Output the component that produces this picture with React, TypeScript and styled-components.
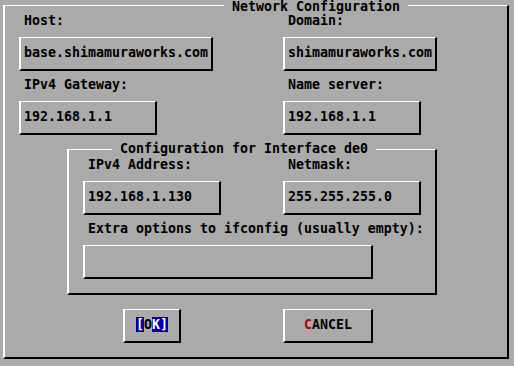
import React from "react";
import styled, { createGlobalStyle } from "styled-components";

const GlobalStyle = createGlobalStyle`
  html, body {
    margin: 0;
    padding: 0;
    background: #aaaaaa;
  }
  body {
    font-family: "DejaVu Sans Mono", "Liberation Mono", monospace;
    font-size: 13.29px;
    font-weight: bold;
    line-height: 16px;
    color: #000000;
  }
`;

const Screen = styled.div`
  width: 514px;
  height: 366px;
  box-sizing: border-box;
  padding: 5px 0 0 3px;
  background: #aaaaaa;
  overflow: hidden;
`;

// 3D frame: light edges top/left, dark edges bottom/right
const Frame = styled.div<{ $width: number }>`
  position: relative;
  box-sizing: border-box;
  width: ${(p) => p.$width}px;
  border-style: solid;
  border-width: 1px 2px 2px 2px;
  border-color: #ffffff #000000 #000000 #ffffff;
`;

const OuterFrame = styled(Frame)`
  padding: 7px 0 14px 0;
`;

const InnerFrame = styled(Frame)`
  margin: 14px 0 0 62px;
  padding: 7px 0 14px 14px;
`;

const FrameTitle = styled.div<{ $left: number; $top: number; $line: number }>`
  position: absolute;
  top: ${(p) => p.$top}px;
  left: ${(p) => p.$left}px;
  padding: 0 8px;
  line-height: ${(p) => p.$line}px;
  background: #aaaaaa;
  white-space: pre;
`;

const FieldGrid = styled.div<{ $col: number }>`
  display: grid;
  grid-template-columns: ${(p) => p.$col}px 1fr;
  row-gap: 6px;
`;

const TopGrid = styled(FieldGrid)`
  padding-left: 14px;
`;

const Field = styled.div<{ $span?: boolean }>`
  display: flex;
  flex-direction: column;
  gap: 8px;
  grid-column: ${(p) => (p.$span ? "1 / span 2" : "auto")};
`;

const Label = styled.div`
  height: 16px;
  padding-left: 5px;
  white-space: pre;
`;

const Box = styled.div<{ $width: number; $center?: boolean }>`
  box-sizing: border-box;
  width: ${(p) => p.$width}px;
  height: 34px;
  padding: 7px 0 8px ${(p) => (p.$center ? 0 : 3)}px;
  border-style: solid;
  border-width: 1px 2px 2px 2px;
  border-color: #ffffff #000000 #000000 #ffffff;
  text-align: ${(p) => (p.$center ? "center" : "left")};
  white-space: pre;
`;

const ButtonRow = styled.div`
  display: flex;
  gap: 102px;
  margin-top: 14px;
  padding-left: 118px;
`;

const Sel = styled.span<{ $on?: boolean }>`
  background: ${(p) => (p.$on ? "#0000aa" : "#aaaaaa")};
  color: ${(p) => (p.$on ? "#ffffff" : "#000000")};
`;

const Hot = styled.span`
  color: #aa0000;
`;

export default function App() {
  return (
    <Screen>
      <GlobalStyle />
      <OuterFrame $width={506}>
        <FrameTitle $left={219} $top={-6} $line={13}>
          Network Configuration
        </FrameTitle>
        <TopGrid $col={264}>
          <Field>
            <Label>Host:</Label>
            <Box $width={194}>base.shimamuraworks.com</Box>
          </Field>
          <Field>
            <Label>Domain:</Label>
            <Box $width={154}>shimamuraworks.com</Box>
          </Field>
          <Field>
            <Label>IPv4 Gateway:</Label>
            <Box $width={138}>192.168.1.1</Box>
          </Field>
          <Field>
            <Label>Name server:</Label>
            <Box $width={138}>192.168.1.1</Box>
          </Field>
        </TopGrid>

        <InnerFrame $width={370}>
          <FrameTitle $left={43} $top={-9} $line={16}>
            Configuration for Interface de0
          </FrameTitle>
          <FieldGrid $col={200}>
            <Field>
              <Label>IPv4 Address:</Label>
              <Box $width={138}>192.168.1.130</Box>
            </Field>
            <Field>
              <Label>Netmask:</Label>
              <Box $width={138}>255.255.255.0</Box>
            </Field>
            <Field $span>
              <Label>Extra options to ifconfig (usually empty):</Label>
              <Box $width={290}></Box>
            </Field>
          </FieldGrid>
        </InnerFrame>

        <ButtonRow>
          <Box $width={58} $center>
            <Sel $on>[</Sel>
            <Sel>O</Sel>
            <Sel $on>K]</Sel>
          </Box>
          <Box $width={90} $center>
            <Hot>C</Hot>ANCEL
          </Box>
        </ButtonRow>
      </OuterFrame>
    </Screen>
  );
}
